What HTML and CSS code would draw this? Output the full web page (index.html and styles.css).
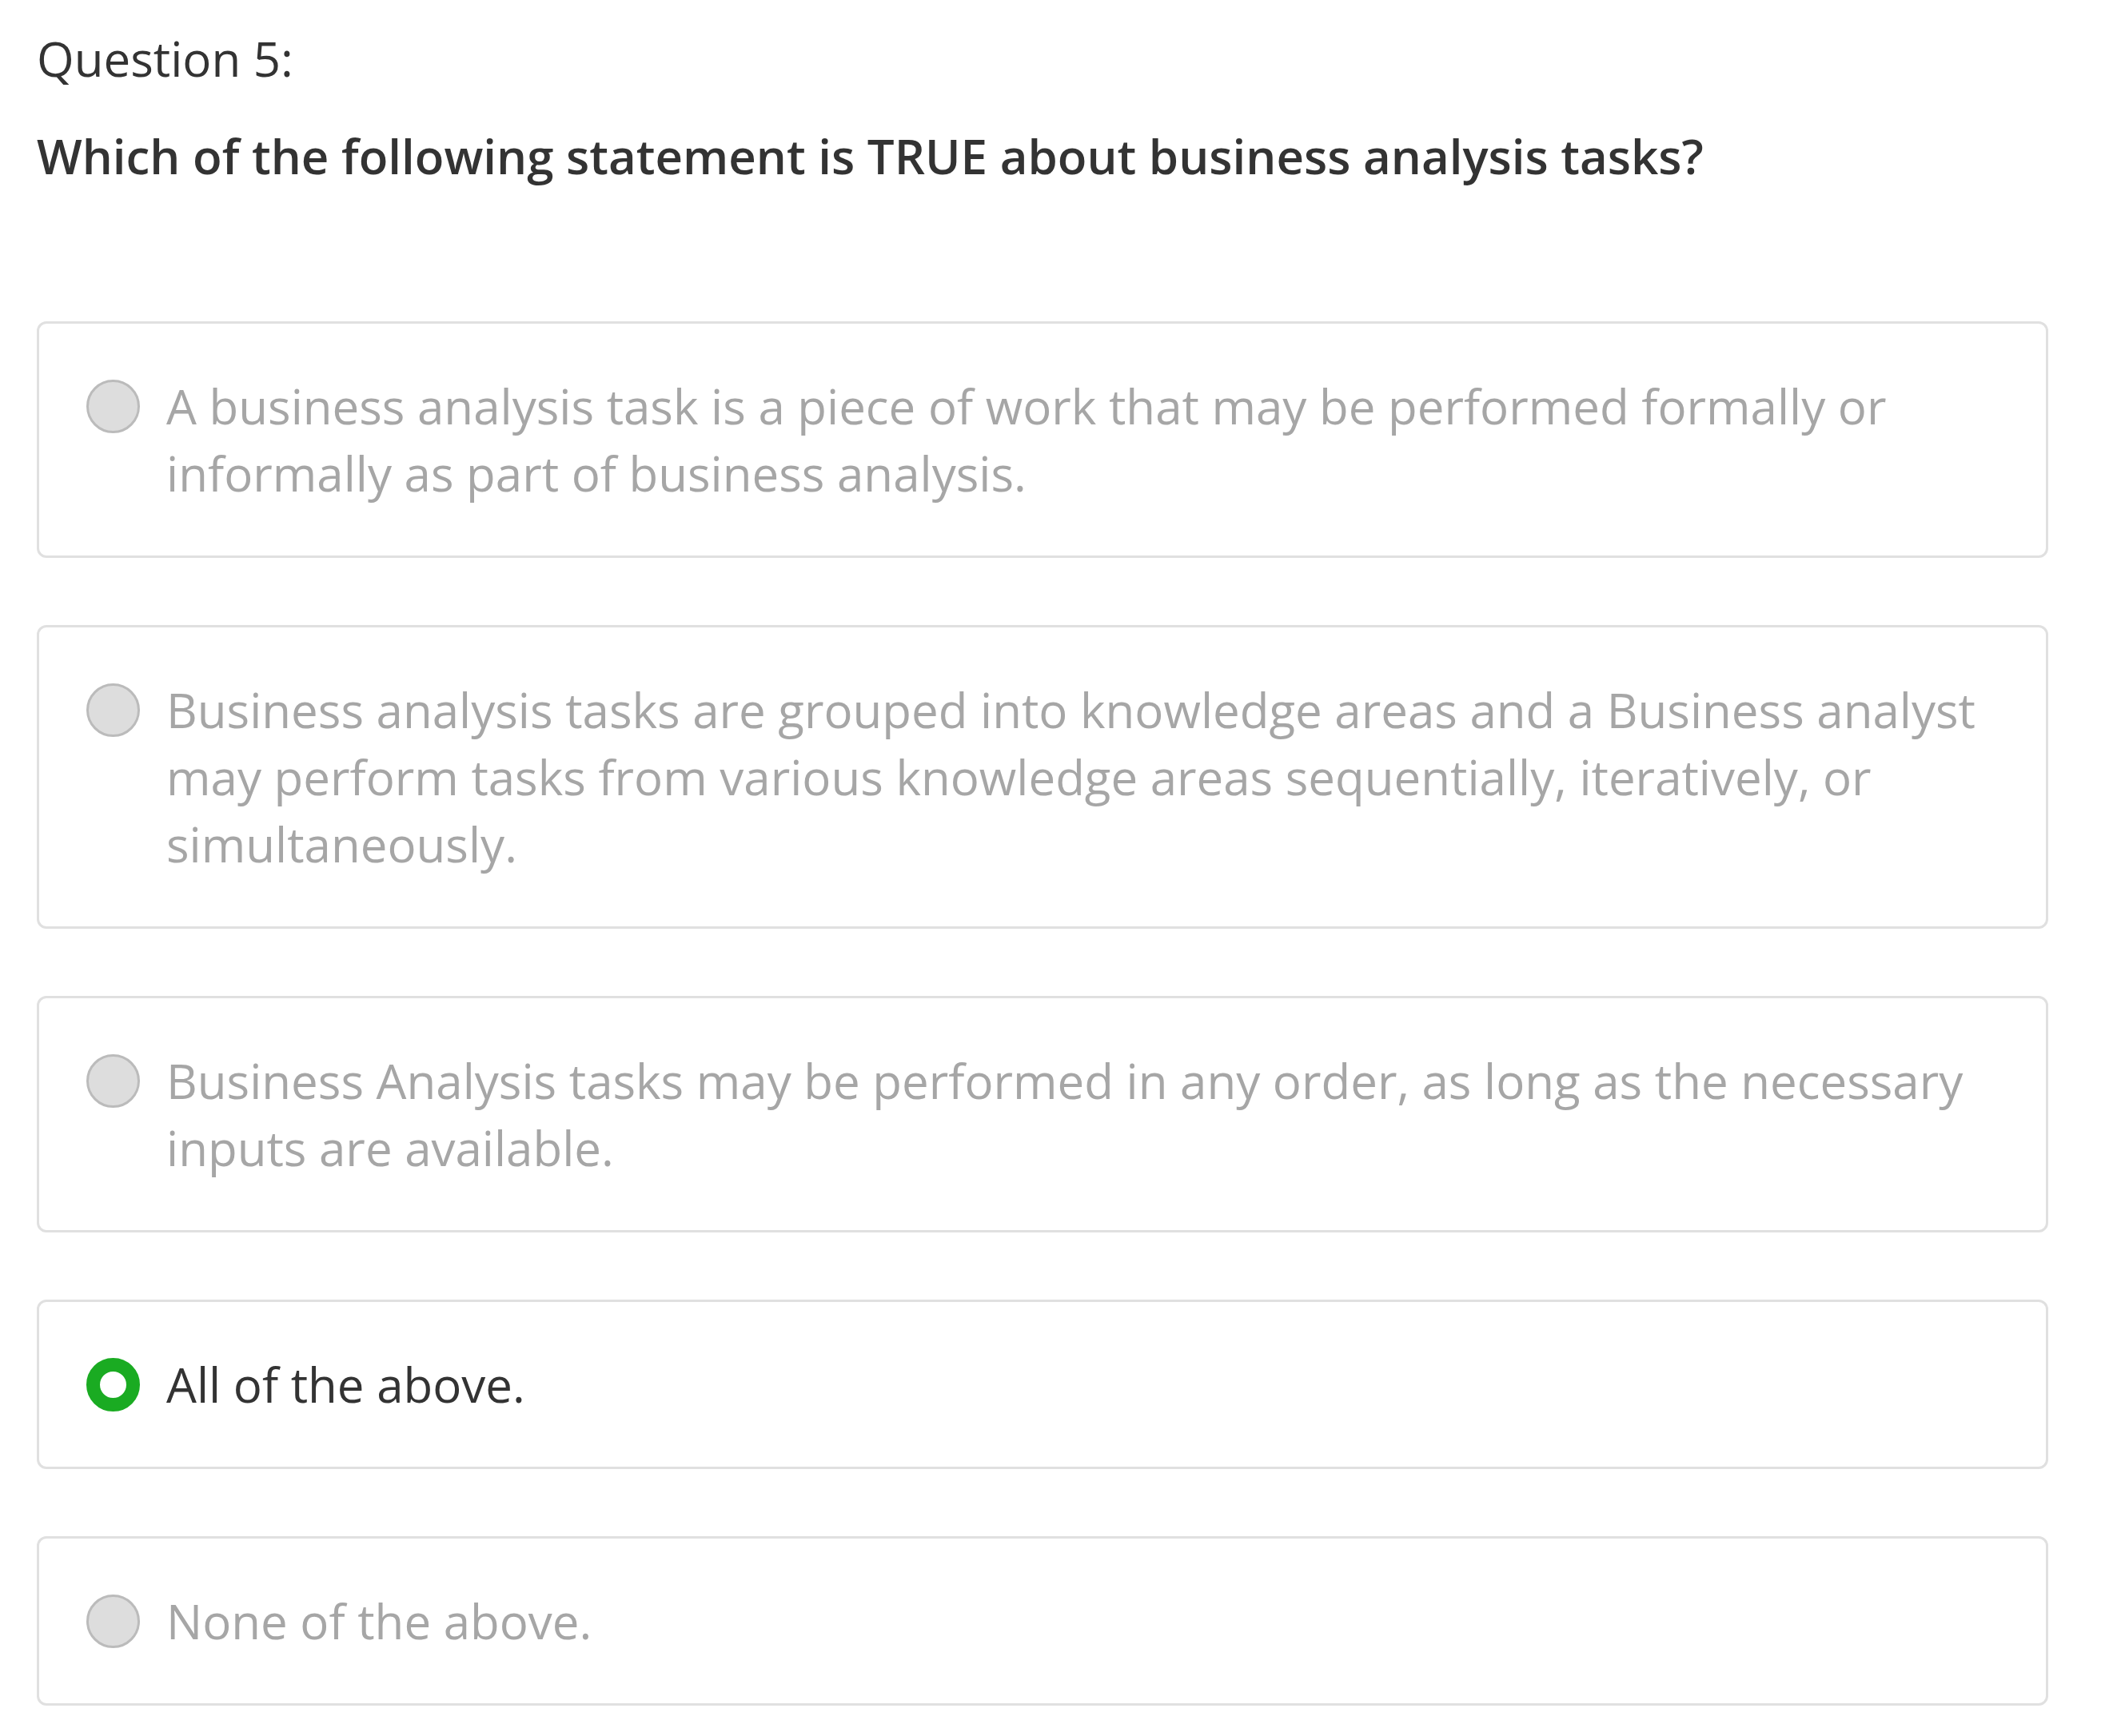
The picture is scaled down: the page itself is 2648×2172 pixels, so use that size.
FILE: index.html
```html
<!DOCTYPE html>
<html lang="en">
<head>
<meta charset="utf-8">
<title>Question 5</title>
<link rel="stylesheet" href="styles.css">
</head>
<body>
<main class="quiz">
  <div class="q-number">Question 5:</div>
  <div class="q-text">Which of the following statement is TRUE about business analysis tasks?</div>
  <div class="options">
    <div class="option">
      <span class="radio"></span>
      <span class="label">A business analysis task is a piece of work that may be performed formally or informally as part of business analysis.</span>
    </div>
    <div class="option">
      <span class="radio"></span>
      <span class="label">Business analysis tasks are grouped into knowledge areas and a Business analyst may perform tasks from various knowledge areas sequentially, iteratively, or simultaneously.</span>
    </div>
    <div class="option">
      <span class="radio"></span>
      <span class="label">Business Analysis tasks may be performed in any order, as long as the necessary inputs are available.</span>
    </div>
    <div class="option selected">
      <span class="radio"></span>
      <span class="label">All of the above.</span>
    </div>
    <div class="option">
      <span class="radio"></span>
      <span class="label">None of the above.</span>
    </div>
  </div>
</main>
</body>
</html>
```

FILE: styles.css
```css
html, body {
  margin: 0;
  padding: 0;
  background: #ffffff;
}
body {
  font-family: "Open Sans", "Noto Sans", sans-serif;
  color: #333333;
}
.quiz {
  width: 2516px;
  padding: 31px 0 0 46px;
}
.q-number {
  font-size: 60px;
  line-height: 84px;
  font-weight: 400;
  color: #333333;
}
.q-text {
  font-size: 60px;
  line-height: 84px;
  font-weight: 600;
  color: #333333;
  margin-top: 38px;
}
.options {
  display: flex;
  flex-direction: column;
  gap: 84px;
  margin-top: 165px;
}
.option {
  display: flex;
  align-items: flex-start;
  gap: 33px;
  border: 3px solid #e0e0e0;
  border-radius: 12px;
  padding: 61px 50px 61px 59px;
}
.radio {
  flex: none;
  box-sizing: border-box;
  width: 67px;
  height: 67px;
  margin-top: 9px;
  border-radius: 50%;
  background: #dddddd;
  border: 3px solid #bbbbbb;
}
.label {
  font-size: 60px;
  line-height: 84px;
  color: #a6a6a6;
}
.option.selected .radio {
  background: #ffffff;
  border: 17px solid #1aab22;
}
.option.selected .label {
  color: #333333;
}
```
